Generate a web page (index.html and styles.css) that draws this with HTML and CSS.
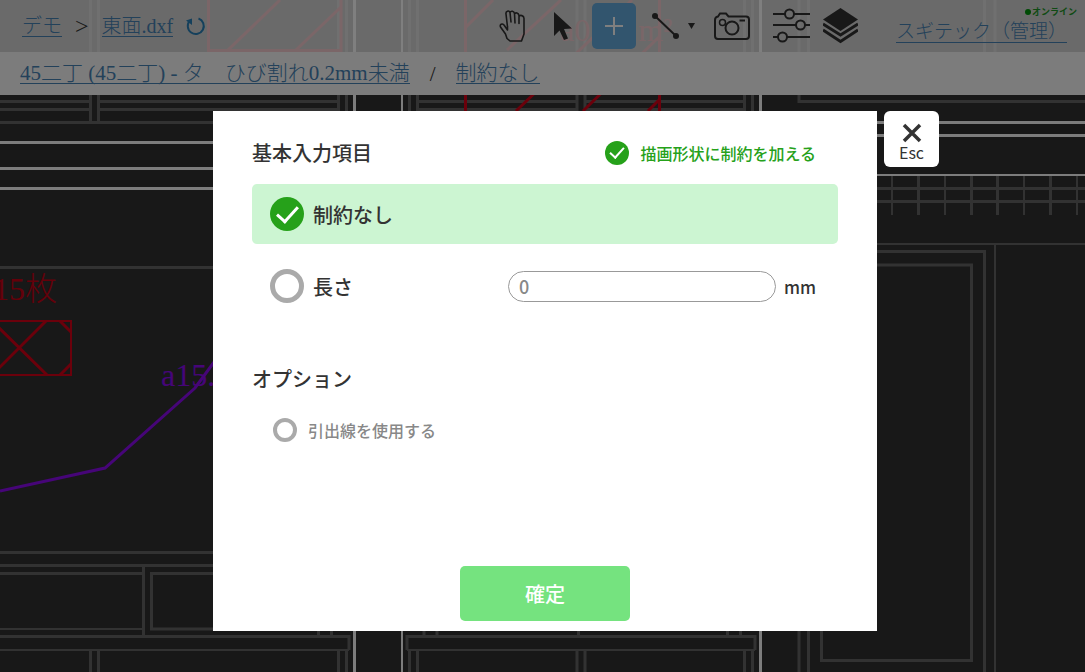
FILE: index.html
```html
<!DOCTYPE html>
<html lang="ja">
<head>
  <meta charset="UTF-8">
  <meta name="viewport" content="width=device-width, initial-scale=1.0">
  <title>東面.dxf</title>
  <link rel="stylesheet" href="styles.css">
</head>
<body>

  <!-- 図面 -->
  <svg class="drawing" aria-hidden="true">
    <g class="line">
      <path d="M0 101.500H90M98 101.500H338M0 109.500H90M98 109.500H338M90.500 0V121M98.500 0V121M0 122.500H338M338.500 0V122M346.500 0V122"/>
      <path d="M409.500 0V122M417.500 0V122M417 101.500H577M585 101.500H745M417 109.500H577M585 109.500H745M577 0V122M585 0V122M744.500 0V122M752.500 0V122"/>
      <path d="M799 0V101.500H1085M808.500 0V52M984.500 0V52M995 0V52"/>
      <path d="M0 267.500H213M0 552.500H213M0 565.500H213M0 573.500H143M143.500 567V635M213 573.500H151.500V629H213"/>
      <path d="M0 636.500H349V650M90.500 651V672M98.500 651V672M318.500 620V635M331.500 620V635M338.500 651V672M346.500 651V672"/>
      <path d="M407 650V636.500H755V650M409.500 651V672M417.500 651V672M424 620V635M437 620V635M578.500 620V635M727.500 620V635M740.500 620V635"/>
      <path d="M577 651V672M585 651V672M744.500 651V672M752.500 651V672M799 620V672M808.500 620V672M821.500 620V660.500H971.500V265H870"/>
      <path d="M870 188.500H1085M870 201.500H1085M870 251.500H984.500V672M918.500 175V215M971.500 175V215M997.500 175V215M1050.500 175V215"/>
    </g>
    <g class="line line-thin">
      <path d="M0 629H143M0 650H349M407 650H755M870 244H1085M995 244V672M892 175V215M945 175V215M1024 175V215M1077 175V215"/>
    </g>
    <g class="line line-bright">
      <path d="M0 142.500H213M0 168.500H213M0 188.500H213M354.500 0V672M760.500 0V672M760 122.500H1085M760 135.500H1085"/>
      <path class="line-thin" d="M402 0V672M870 175H1085"/>
    </g>
    <g class="line line-red">
      <path d="M208.500 0V50.500H341V0M280 0L228 50M341 7L296 50M465.500 0V111M659.500 0V111M493 0L466 27M561 0L507 50M632 0L516 111M660 36L583 111M660 99L648 111"/>
      <path class="line-thin" d="M0 321H71V375H0"/>
      <path d="M46 321L-8 375M-8 321L47 375M60 321L71 332M60 375L71 364"/>
    </g>
    <path class="line line-purple" d="M0 491L105 468L195 388L220 354"/>
    <text class="note note-red" x="57" y="300" text-anchor="end">15枚</text>
    <text class="note note-red" x="560" y="41">a0.00 m²</text>
    <text class="note note-purple" x="161" y="386">a15.0</text>
  </svg>

  <!-- ヘッダー -->
  <header class="header">
    <nav class="breadcrumb">
      <a href="#">デモ</a>
      <span class="separator">&gt;</span>
      <a href="#">東面.dxf</a>
      <button class="icon-button reload" aria-label="再読み込み">
        <svg width="20" height="20" viewBox="0 0 20 20" fill="none" stroke="currentColor" stroke-width="2">
          <path d="M12.500 2.500A8 8 0 1 1 4 4.500"/>
          <path d="M0 4.500L6 2.500L6 9Z" fill="currentColor" stroke="none"/>
        </svg>
      </button>
    </nav>

    <div class="toolbar">
      <button class="icon-button tool-hand" aria-label="移動">
        <svg width="28" height="34" viewBox="0 0 28 34" fill="none" stroke="currentColor" stroke-width="1.600" stroke-linejoin="round" stroke-linecap="round">
          <path d="M8.500 18L7 5C6.500 2 10 1 11 3.500L12 13M11 3.500C12 1.500 15 2 15.500 4.500L16 14M15.500 5C16.500 3 19.500 4 20 6.500V14.500M20 7.500C21 5.500 25 6.500 25 9.500V25L22.500 32H11L8 29.500L6.500 25L1.500 18C0.500 15.500 3 14 5 16L8.500 21V17"/>
        </svg>
      </button>
      <button class="icon-button tool-select" aria-label="選択">
        <svg width="18" height="29" viewBox="0 0 18 29" fill="currentColor">
          <path d="M0 0V24L5.500 18.500L10 28L14 26.500L10 17L18 16.500Z"/>
        </svg>
      </button>
      <button class="icon-button tool-add" aria-label="追加">
        <svg width="18" height="18" viewBox="0 0 18 18" stroke="currentColor" stroke-width="2">
          <path d="M9 0V18M0 9H18"/>
        </svg>
      </button>
      <button class="icon-button tool-line" aria-label="線分">
        <svg width="44" height="28" viewBox="0 0 44 28" fill="currentColor">
          <path d="M3 4L24 24" stroke="currentColor" stroke-width="2"/>
          <circle cx="3" cy="4" r="3"/>
          <circle cx="24" cy="24" r="3"/>
          <path d="M36 11H43L39.500 17Z"/>
        </svg>
      </button>
      <button class="icon-button tool-camera" aria-label="写真">
        <svg width="36" height="28" viewBox="0 0 36 28" fill="none" stroke="currentColor" stroke-width="2">
          <path d="M4 4.500L6 1.500H12L14.500 4.500H32Q35 4.500 35 7.500V24Q35 27 32 27H4Q1 27 1 24V8Q1 5 4 4.500Z"/>
          <circle cx="18" cy="16" r="6.500"/>
          <circle cx="8.500" cy="10.500" r="3" stroke-width="1.500"/>
          <path d="M25.500 8.500H31"/>
        </svg>
      </button>
      <button class="icon-button tool-settings" aria-label="設定">
        <svg width="37" height="36" viewBox="0 0 37 36" fill="none" stroke="currentColor" stroke-width="2">
          <path d="M0 6H12M21 6H37M0 17H23M32 17H37M0 29H5M14 29H37"/>
          <circle cx="16.500" cy="6" r="4.500"/>
          <circle cx="27.500" cy="17" r="4.500"/>
          <circle cx="9.500" cy="29" r="4.500"/>
        </svg>
      </button>
      <button class="icon-button" aria-label="レイヤー">
        <svg width="35" height="36" viewBox="0 0 35 36" fill="currentColor">
          <path d="M17.500 0L35 11.500L17.500 23L0 11.500Z"/>
          <path d="M0 16L17.500 27L35 16" fill="none" stroke="currentColor" stroke-width="3"/>
          <path d="M0 22L17.500 33.500L35 22" fill="none" stroke="currentColor" stroke-width="3"/>
        </svg>
      </button>
    </div>

    <div class="user">
      <span class="online">オンライン</span>
      <a href="#">スギテック（管理）</a>
    </div>
  </header>

  <div class="subheader">
    <a href="#">45二丁 (45二丁) - タ　ひび割れ0.2mm未満</a>
    <span>/</span>
    <a href="#">制約なし</a>
  </div>

  <!-- モーダル -->
  <div class="overlay">
    <form class="modal" role="dialog" aria-labelledby="modalTitle">
      <div class="modal-header">
        <h2 id="modalTitle">基本入力項目</h2>
        <label class="option option-active">
          <input type="checkbox" class="check" checked>
          描画形状に制約を加える
        </label>
      </div>

      <div class="choices">
        <div class="choice">
          <label class="choice-label">
            <input type="radio" name="constraint" class="check check-large" checked>
            制約なし
          </label>
        </div>
        <div class="choice">
          <label class="choice-label">
            <input type="radio" name="constraint" class="check check-large">
            長さ
          </label>
          <input type="text" class="length-input" id="length" placeholder="0" aria-label="長さ">
          <label class="unit" for="length">mm</label>
        </div>
      </div>

      <h2 class="options-title">オプション</h2>
      <label class="option options-item">
        <input type="checkbox" class="check">
        引出線を使用する
      </label>

      <button type="submit" class="submit">確定</button>

      <button type="button" class="close">
        <svg width="20" height="20" viewBox="0 0 20 20" stroke="currentColor" stroke-width="3.500" aria-hidden="true">
          <path d="M2 2L18 18M18 2L2 18"/>
        </svg>
        Esc
      </button>
    </form>
  </div>

</body>
</html>
```
FILE: styles.css
```css
* {
  margin: 0;
  padding: 0;
  box-sizing: border-box;
}

body {
  min-height: 100vh;
  overflow: hidden;
  background-color: #303030;
  font-family: "Noto Sans CJK JP", sans-serif;
  color: #333;
}

button,
input {
  font: inherit;
}

button {
  border: none;
  cursor: pointer;
}

/* 図面 */
.drawing {
  position: absolute;
  top: 0;
  left: 0;
  width: 100%;
  height: 100%;
}

.line {
  fill: none;
  stroke: #646464;
  stroke-width: 3;
}

.line-bright {
  stroke: #fafafa;
}

.line-red {
  stroke: #d60016;
}

.line-purple {
  stroke: #8c0af0;
}

.line-thin {
  stroke-width: 2;
}

.note {
  font-family: "Liberation Serif", "Noto Sans CJK JP", serif;
  font-size: 32px;
  font-weight: 300;
}

.note-red {
  fill: #c80014;
}

.note-purple {
  fill: #8c0af0;
}

/* ヘッダー */
.header,
.subheader {
  position: relative;
  display: flex;
  align-items: center;
  font-family: "Liberation Serif", "Noto Sans CJK JP", serif;
  font-size: 20px;
  font-weight: 300;
  line-height: 20px;
  white-space: nowrap;
}

.header {
  height: 52px;
  padding: 0 18px 0 22px;
  background-color: rgba(255, 255, 255, 0.8);
}

.header a,
.subheader a {
  border-bottom: 1px solid #4682b4;
  color: #4682b4;
  text-decoration: none;
}

.breadcrumb {
  display: flex;
  align-items: center;
  gap: 13px;
}

.separator {
  font-size: 24px;
}

.icon-button {
  display: flex;
  align-items: center;
  justify-content: center;
  background: none;
  color: #303030;
}

.reload {
  color: #2a80b8;
}

.toolbar {
  display: flex;
  align-items: center;
  margin-left: auto;
}

.tool-select {
  margin: 0 20px 0 27px;
}

.tool-add {
  width: 44px;
  height: 46px;
  border-radius: 5px;
  background-color: #64aadc;
  color: #fff;
}

.tool-line {
  margin: 0 18px 0 16px;
}

.tool-settings {
  margin: 0 13px 0 23px;
}

.user {
  position: relative;
  margin-left: 38px;
  padding-top: 12px;
  font-size: 19px;
}

.online {
  position: absolute;
  top: -8px;
  right: -10px;
  display: flex;
  align-items: center;
  gap: 1px;
  color: #1e9628;
  font-family: "Noto Sans CJK JP", sans-serif;
  font-size: 9px;
  font-weight: bold;
}

.online::before {
  content: "";
  width: 6px;
  height: 6px;
  border-radius: 50%;
  background-color: #00960a;
}

.subheader {
  gap: 20px;
  height: 43px;
  padding: 0 20px;
  background-color: #f8f8f8;
  font-size: 21px;
}

/* モーダル */
.overlay {
  position: absolute;
  top: 0;
  left: 0;
  display: flex;
  align-items: flex-start;
  justify-content: center;
  width: 100%;
  height: 100%;
  padding: 111px 0 0 5px;
  background-color: rgba(0, 0, 0, 0.5);
}

.modal {
  position: relative;
  display: flex;
  flex-direction: column;
  width: calc(100% - 160px);
  max-width: 664px;
  padding: 26px 39px 10px;
  background-color: #fff;
}

.modal h2 {
  font-size: 20px;
  font-weight: 500;
  line-height: 32px;
}

.modal-header {
  display: flex;
  align-items: center;
  justify-content: space-between;
  margin-bottom: 15px;
  padding-right: 22px;
}

.option {
  display: flex;
  align-items: center;
  gap: 11px;
  color: #888;
  font-size: 16px;
  font-weight: 500;
  line-height: 32px;
}

.option-active {
  color: #26a11a;
}

.check {
  display: flex;
  align-items: center;
  justify-content: center;
  width: 24px;
  height: 24px;
  border: 4px solid #aaa;
  border-radius: 50%;
  background-color: #fff;
  appearance: none;
}

.check-large {
  width: 34px;
  height: 34px;
  border-width: 5px;
}

.check:checked {
  border: none;
  background-color: #26a11a;
}

.check:checked::before {
  content: "";
  width: 12px;
  height: 6px;
  margin-bottom: 4px;
  border: solid #fff;
  border-width: 0 0 2px 2px;
  transform: rotate(-48deg);
}

.check-large:checked::before {
  width: 18px;
  height: 9px;
  margin-bottom: 5px;
  border-width: 0 0 3px 3px;
}

.choices {
  display: flex;
  flex-direction: column;
  gap: 12px;
}

.choice {
  display: flex;
  align-items: center;
  height: 60px;
  padding: 0 22px 0 18px;
  border-radius: 5px;
  font-size: 20px;
  font-weight: 500;
}

.choice:has(:checked) {
  background-color: #ccf5d2;
}

.choice-label {
  display: flex;
  flex: 1;
  align-items: center;
  gap: 9px;
}

.length-input {
  width: 268px;
  height: 31px;
  margin-right: 8px;
  padding: 0 10px;
  border: 1px solid #999;
  border-radius: 16px;
  color: #333;
  font-size: 18px;
}

.length-input::placeholder {
  color: #888;
}

.unit {
  font-size: 17px;
}

.options-title {
  margin-top: 47px;
}

.options-item {
  margin: 19px 0 0 21px;
}

.submit {
  align-self: center;
  width: 170px;
  height: 55px;
  margin-top: 120px;
  border-radius: 5px;
  background-color: #75e37f;
  color: #fff;
  font-size: 20px;
  font-weight: 500;
}

.close {
  position: absolute;
  top: 0;
  left: 100%;
  display: flex;
  flex-direction: column;
  align-items: center;
  gap: 1px;
  width: 55px;
  height: 56px;
  margin-left: 7px;
  padding-top: 12px;
  border-radius: 6px;
  background-color: #fff;
  color: #333;
  font-size: 16px;
  line-height: 16px;
}
```
